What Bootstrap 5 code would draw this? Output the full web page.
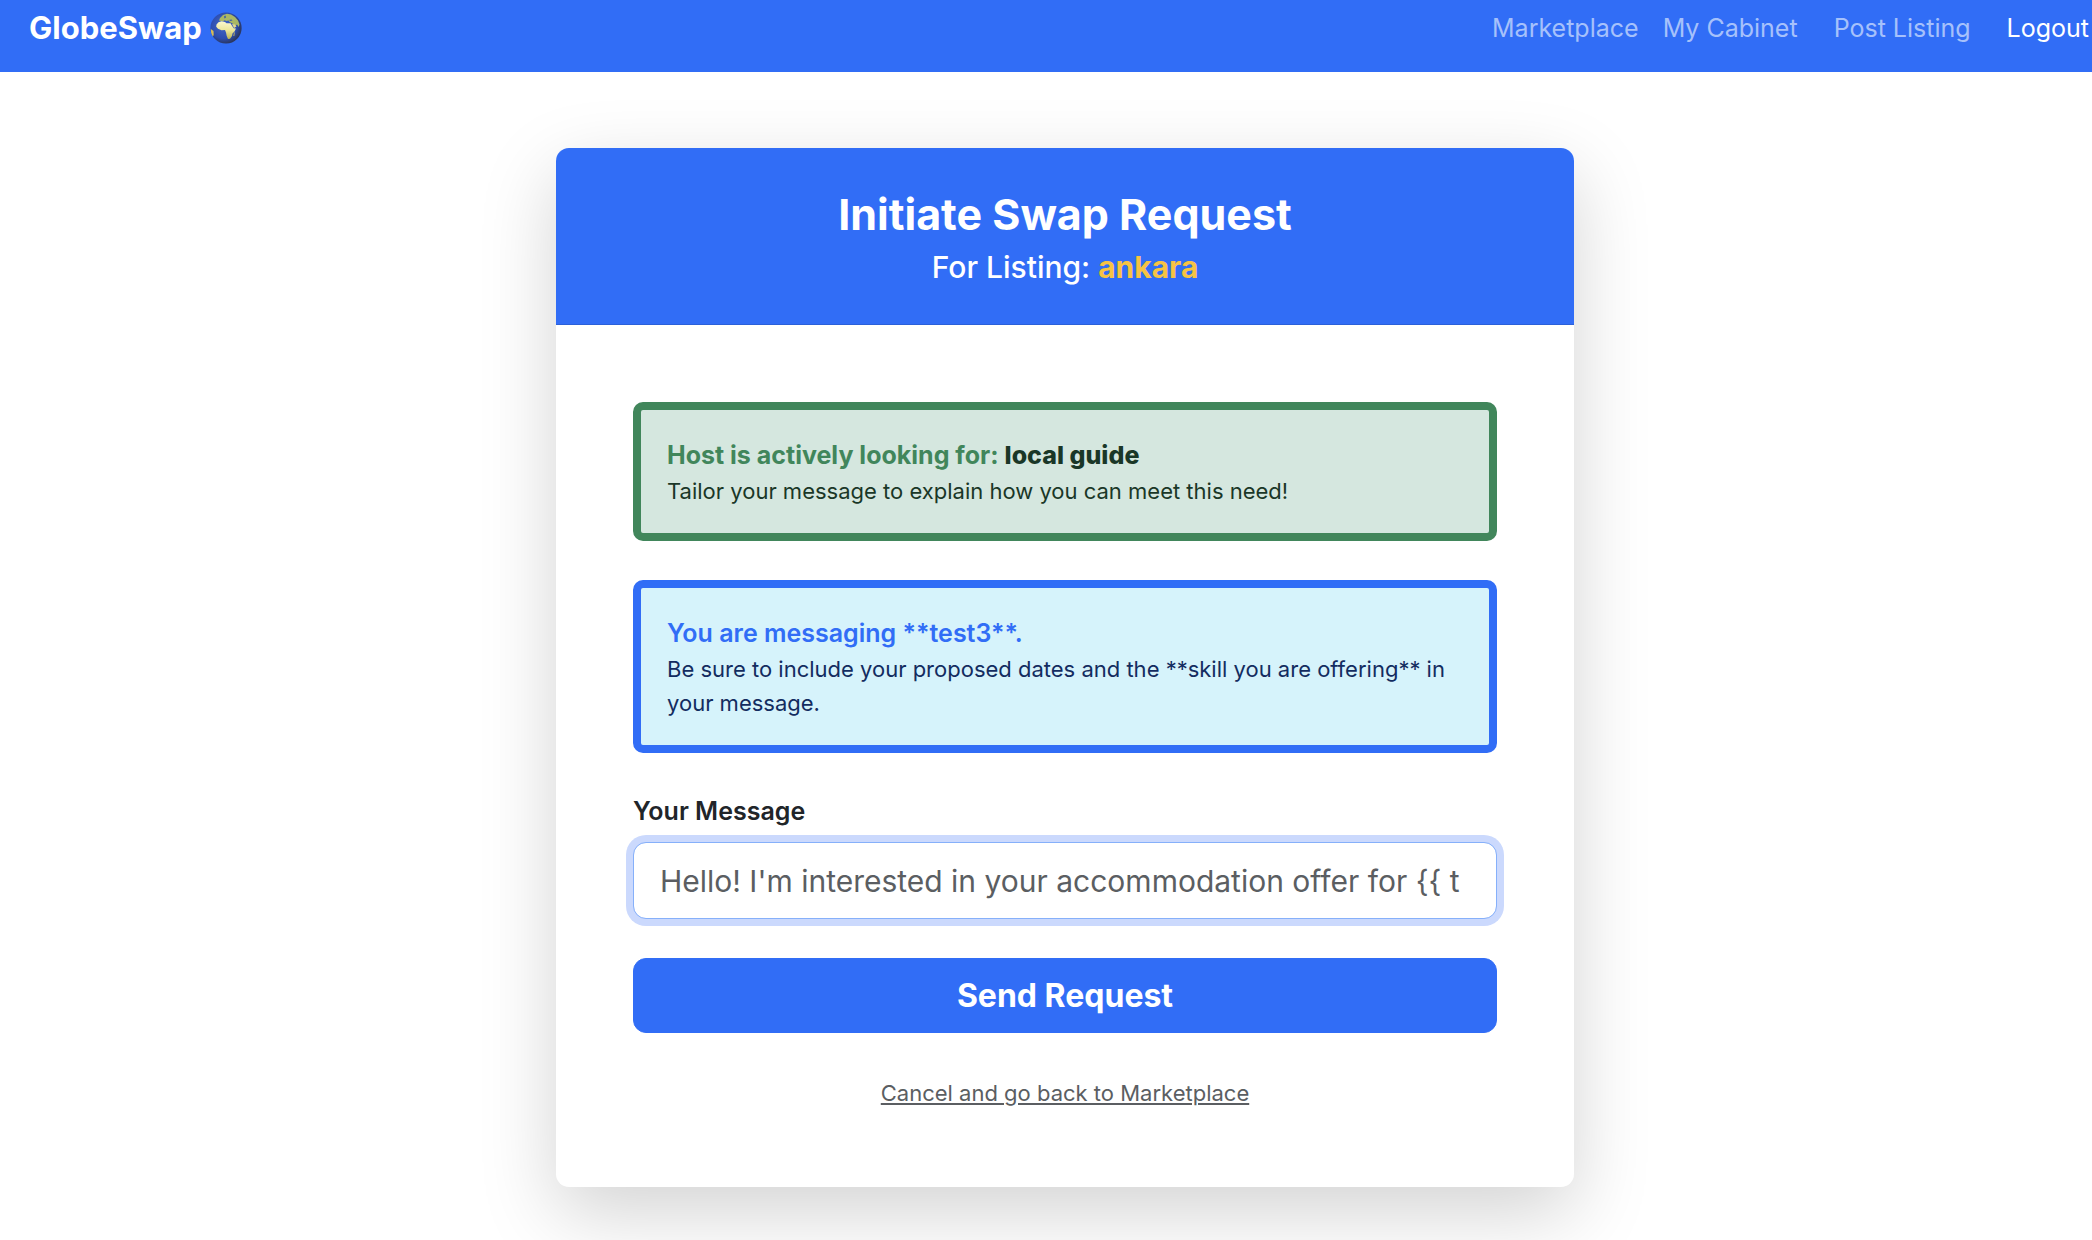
<!DOCTYPE html>
<html lang="en">
<head>
<meta charset="utf-8">
<meta name="viewport" content="width=device-width, initial-scale=1">
<title>GlobeSwap - Initiate Swap Request</title>
<link href="https://cdn.jsdelivr.net/npm/bootstrap@5.3.0/dist/css/bootstrap.min.css" rel="stylesheet">
<style>
  :root { --swap-blue: #316df6; --swap-green: #41865b; --swap-gap: 39px; }
  body { font-family: Inter, "Liberation Sans", sans-serif; font-size: 25px; line-height: 38px; background: #fff; }
  .site-bar { background: var(--swap-blue); padding: 9px 3px 25px 29px; }
  .site-bar .navbar-brand { font-size: 31px; line-height: 38px; padding: 0; margin: 0; gap: 8px; }
  .globe { width: 32px; height: 32px; }
  .site-bar .site-links { gap: 36px; --bs-navbar-nav-link-padding-x: 0; }
  .site-links .nav-link { padding: 0; color: #a6c1fb; }
  .site-links .nav-link.active { color: #fff; }
  .site-links .tight { margin-right: -12px; }
  .swap-main { padding: 76px 0 54px 38px; }
  .swap-card { max-width: 1018px; border: 0; border-radius: 13px; box-shadow: 0 26px 77px rgba(0,0,0,.175); }
  .swap-card .card-header { background: var(--swap-blue); padding: 38px; border-bottom: 1px solid #2b60d9; border-radius: 13px 13px 0 0; }
  .swap-card h1 { font-size: 43px; line-height: 56px; margin-bottom: 6px; }
  .swap-card h2 { font-size: 30px; line-height: 38px; }
  .listing-name { color: #f6c344; }
  .swap-card .card-body { padding: 77px; }
  .note { border-width: 8px; border-radius: 10px; padding: 26px 26px 25px; margin-bottom: var(--swap-gap); }
  .note-host { background: #d5e7df; border-color: var(--swap-green); color: #1a3727; }
  .note-host .lead-in { color: var(--swap-green); }
  .note-host strong { font-weight: 800; }
  .note-info { background: #d6f3fb; border-color: var(--swap-blue); color: #132c60; }
  .note-info .lead-in { color: var(--swap-blue); }
  .fine { font-size: 22px; line-height: 34px; }
  .swap-card .form-label { margin-bottom: 12px; }
  .message-box { font-size: 30px; line-height: 38px; height: 77px; padding: 12px 26px; border-radius: 13px; margin-bottom: var(--swap-gap); }
  .message-box, .message-box:focus { border-color: #86b0fa; box-shadow: 0 0 0 7px #cbd9fd; }
  .message-box::placeholder { color: #5b5e62; }
  .send-btn { background: var(--swap-blue); border-color: var(--swap-blue); font-size: 32px; line-height: 47px; padding: 13px 26px; border-radius: 13px; }
  .cancel-row { margin-top: 43px; }
  .cancel-row a { color: #5b5e62; }
</style>
</head>
<body>
<nav class="navbar navbar-expand site-bar">
  <a class="navbar-brand d-flex align-items-center fw-bold text-white" href="#">GlobeSwap
    <svg class="globe" viewBox="0 0 32 32" aria-hidden="true">
      <defs>
        <radialGradient id="sea" cx=".42" cy=".42" r=".6"><stop offset="0" stop-color="#4468c8"/><stop offset=".7" stop-color="#2c4cae"/><stop offset="1" stop-color="#2b3558"/></radialGradient>
        <linearGradient id="land" x1="0" y1="0" x2="0" y2="1"><stop offset="0" stop-color="#fbf8d0"/><stop offset=".5" stop-color="#ece69a"/><stop offset="1" stop-color="#b9b255"/></linearGradient>
      </defs>
      <circle cx="16" cy="16" r="15.6" fill="url(#sea)"/>
      <path d="M9 8.500l1-2.500 3-3 4-1.300 4 .8 4 2.500 3 3.500 1.500 4-.8 2.500-1.700-2.500-2 1.500-2.500-2.500-3-1.500-1-1.500-2 .6-2-.8-1.500 1.200z" fill="#a9b765"/>
      <path d="M6.500 12.500l2-2.300 3-.9 3.500.7 1.500 1.200 4 0 1.500 2.500 1.700 2.600 2.300.2-1.500 3-2 2-.5 2.500-2 2.700-2 .3-1.300-3-.7-3.500-1-2.500-3.500.2-3.500-1.500-1.800-2z" fill="url(#land)"/>
      <path d="M22 12l3 .5 1.500 2-2.500 1.500z" fill="#e2d992"/>
      <path d="M.8 17l2.700 2 .2 4-.9 1.500-1.600-3.500z" fill="#d9bd58"/>
      <path d="M24 20.500l.9-.3-.6 3.700-1 .2z" fill="#c2b45c"/>
      <path d="M14 4.500l1.500-1 .5 2-1.500 1zM19 8l2.500-.5 1 1-2 .6z" fill="#3c5da8"/>
    </svg>
  </a>
  <ul class="navbar-nav ms-auto site-links">
    <li class="nav-item tight"><a class="nav-link" href="#">Marketplace</a></li>
    <li class="nav-item"><a class="nav-link" href="#">My Cabinet</a></li>
    <li class="nav-item"><a class="nav-link" href="#">Post Listing</a></li>
    <li class="nav-item"><a class="nav-link active" href="#">Logout</a></li>
  </ul>
</nav>

<main class="swap-main">
  <div class="card swap-card mx-auto">
    <div class="card-header text-center text-white">
      <h1 class="fw-bold">Initiate Swap Request</h1>
      <h2 class="fw-medium mb-0">For Listing: <span class="listing-name fw-bold">ankara</span></h2>
    </div>
    <div class="card-body">
      <div class="alert note note-host" role="alert">
        <div class="fw-bold"><span class="lead-in">Host is actively looking for:</span> <strong>local guide</strong></div>
        <div class="fine">Tailor your message to explain how you can meet this need!</div>
      </div>
      <div class="alert note note-info" role="alert">
        <div class="fw-semibold lead-in">You are messaging **test3**.</div>
        <div class="fine">Be sure to include your proposed dates and the **skill you are offering** in your message.</div>
      </div>
      <form>
        <label class="form-label fw-semibold d-block" for="message">Your Message</label>
        <input class="form-control message-box" id="message" type="text" placeholder="Hello! I'm interested in your accommodation offer for {{ t">
        <button class="btn btn-primary send-btn w-100 fw-bold" type="button">Send Request</button>
      </form>
      <div class="text-center fine cancel-row"><a href="#">Cancel and go back to Marketplace</a></div>
    </div>
  </div>
</main>
<script src="https://cdn.jsdelivr.net/npm/bootstrap@5.3.0/dist/js/bootstrap.bundle.min.js"></script>
</body>
</html>
